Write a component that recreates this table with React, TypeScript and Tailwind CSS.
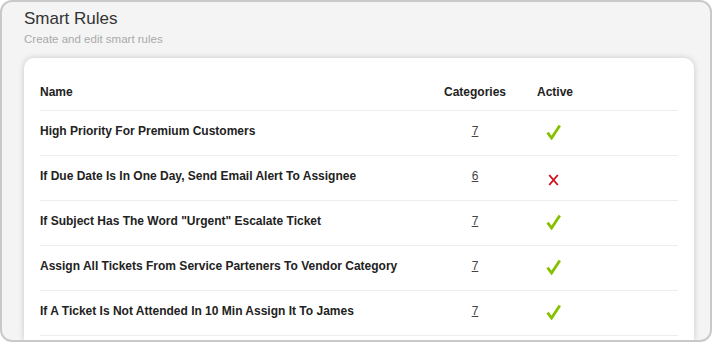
import React from "react";

const rows = [
  { name: "High Priority For Premium Customers", cat: 7, active: true },
  { name: "If Due Date Is In One Day, Send Email Alert To Assignee", cat: 6, active: false },
  { name: 'If Subject Has The Word "Urgent" Escalate Ticket', cat: 7, active: true },
  { name: "Assign All Tickets From Service Parteners To Vendor Category", cat: 7, active: true },
  { name: "If A Ticket Is Not Attended In 10 Min Assign It To James", cat: 7, active: true },
];

function Check() {
  return (
    <svg width="15" height="16" viewBox="0 0 15 16">
      <path d="M1.5 8.6 L5.6 14 L13.8 1.5" fill="none" stroke="#86c100" strokeWidth="2.8" strokeLinecap="butt" strokeLinejoin="miter" />
    </svg>
  );
}

function Cross() {
  return (
    <svg width="11" height="12" viewBox="0 0 11 12">
      <path d="M1.2 1 L9.8 11 M9.8 1 L1.2 11" fill="none" stroke="#d0121b" strokeWidth="1.9" />
    </svg>
  );
}

export default function App() {
  return (
    <div
      className="w-[712px] h-[342px] border-2 border-[#c9c9c9] rounded-[12px] overflow-hidden bg-[#f4f4f4] flex flex-col"
      style={{ fontFamily: '"Liberation Sans", Arial, sans-serif' }}
    >
      <div className="pl-[22px] pt-[6px]">
        <div className="text-[17px] leading-[22px] text-[#333]">Smart Rules</div>
        <div className="text-[11.5px] leading-[14px] mt-[2px] text-[#aaa]">Create and edit smart rules</div>
      </div>
      <div className="mt-[12px] ml-[22px] w-[670px] flex-1 bg-white rounded-t-[10px] shadow-[0_0_6px_rgba(0,0,0,0.18)] px-[16px] pt-[15px]">
        <div className="flex items-center h-[38px] border-b border-[#eeeeee] text-[12px] font-bold text-[#222] pt-[1px]">
          <div className="flex-1">Name</div>
          <div className="w-[80px] text-center">Categories</div>
          <div className="w-[60px] ml-[10px] text-center">Active</div>
          <div className="w-[93px]" />
        </div>
        {rows.map((r, i) => (
          <div key={i} className="flex items-center h-[45px] border-b border-[#eeeeee] pb-[5px] text-[12px] text-[#222]">
            <div className="flex-1 font-bold">{r.name}</div>
            <div className="w-[80px] text-center">
              <span className="underline text-[#444]">{r.cat}</span>
            </div>
            <div className="w-[60px] ml-[10px] flex justify-center">
              {r.active ? (
                <span className="mt-[3px] ml-[-4px]"><Check /></span>
              ) : (
                <span className="mt-[8px] ml-[-3px]"><Cross /></span>
              )}
            </div>
            <div className="w-[93px]" />
          </div>
        ))}
      </div>
    </div>
  );
}
